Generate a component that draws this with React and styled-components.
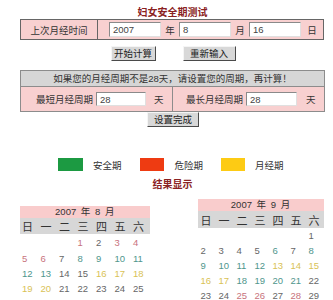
import React from "react";
import styled, { createGlobalStyle } from "styled-components";

const GlobalStyle = createGlobalStyle`
  body {
    margin: 0;
    background: #ffffff;
    font-family: "Liberation Sans", "Noto Sans CJK SC", sans-serif;
    color: #333333;
  }
`;

const Page = styled.div`
  width: 305px;
  margin-left: 20px;
  font-size: 9.5px;
`;

const Title = styled.div`
  margin-top: 7px;
  height: 12px;
  line-height: 12px;
  text-align: center;
  font-size: 10px;
  font-weight: bold;
  color: #8a2222;
`;

const DateRow = styled.div`
  display: flex;
  align-items: stretch;
  box-sizing: border-box;
  height: 21px;
  width: 304px;
  border: 1px solid #666666;
  background: #f8d0d0;
`;

const Label = styled.div`
  width: 76px;
  border-right: 1px solid #666666;
  display: flex;
  align-items: center;
  justify-content: center;
  color: #333;
`;

const Field = styled.input`
  box-sizing: border-box;
  width: ${(p) => p.w || 52}px;
  height: ${(p) => p.h || 15}px;
  margin: auto 0;
  margin-left: ${(p) => p.ml || 0}px;
  padding: 0 3px;
  border: 1px solid;
  border-color: #8a8a8a #e0e0e0 #e0e0e0 #8a8a8a;
  background: #ffffff;
  font-family: "Liberation Sans", "Noto Sans CJK SC", sans-serif;
  font-size: 9.5px;
  color: #444;
  outline: none;
`;

const Unit = styled.div`
  width: ${(p) => p.w || 18}px;
  flex: ${(p) => (p.grow ? 1 : "none")};
  display: flex;
  align-items: center;
  justify-content: center;
  color: #333;
`;

const ButtonBar = styled.div`
  display: flex;
  justify-content: center;
  gap: ${(p) => p.gap || 0}px;
  margin-top: ${(p) => p.mt || 0}px;
  padding-left: 1px;
`;

const Btn = styled.button`
  box-sizing: border-box;
  width: ${(p) => p.w}px;
  height: 15px;
  padding: 0;
  border: 1px solid;
  border-color: #f5f5f5 #4a4a4a #4a4a4a #f5f5f5;
  background: #d8d8d8;
  font-family: "Liberation Sans", "Noto Sans CJK SC", sans-serif;
  font-size: 9.5px;
  color: #222;
  line-height: 13px;
`;

const CycleTable = styled.div`
  margin-top: 9px;
  border: 1px solid #8c8c8c;
`;

const CycleHead = styled.div`
  height: 15px;
  line-height: 15px;
  text-align: center;
  background: #d6d6d6;
  border-bottom: 1px solid #8c8c8c;
  color: #333;
`;

const CycleRow = styled.div`
  display: flex;
  height: 24px;
  background: #f8d0d0;
`;

const CycleHalf = styled.div`
  display: flex;
  align-items: center;
  width: ${(p) => p.w}px;
  padding-left: ${(p) => p.pl}px;
  box-sizing: border-box;
  border-right: ${(p) => (p.divider ? "1px solid #8c8c8c" : "none")};
  flex: ${(p) => (p.grow ? 1 : "none")};
`;

const HalfLabel = styled.span`
  width: ${(p) => p.w}px;
  color: #333;
  white-space: nowrap;
`;

const HalfUnit = styled.span`
  margin-left: ${(p) => p.ml}px;
  color: #333;
`;

const Legend = styled.div`
  display: flex;
  align-items: center;
  margin-top: 31px;
  margin-left: 38px;
  height: 13px;
`;

const Swatch = styled.span`
  width: ${(p) => p.w || 25}px;
  height: 13px;
  background: ${(p) => p.color};
  margin-right: ${(p) => p.gap}px;
`;

const LegendText = styled.span`
  color: #333;
  margin-right: ${(p) => p.mr || 0}px;
  white-space: nowrap;
`;

const ResultTitle = styled.div`
  margin-top: 8px;
  height: 11px;
  line-height: 11px;
  text-align: center;
  font-size: 10px;
  font-weight: bold;
  color: #8a2222;
`;

const Calendars = styled.div`
  display: flex;
  align-items: flex-start;
`;

const Calendar = styled.div`
  width: ${(p) => p.col * 7}px;
  margin-top: ${(p) => p.mt}px;
  margin-left: ${(p) => p.ml || 0}px;
`;

const CalHead = styled.div`
  height: 12px;
  line-height: 12px;
  text-align: center;
  background: #f9cccc;
  color: #333;
  font-size: 9.5px;
  word-spacing: 2px;
`;

const WeekRow = styled.div`
  display: grid;
  grid-template-columns: repeat(7, ${(p) => p.col}px);
  height: ${(p) => p.h}px;
  align-items: center;
  background: #d7d7d7;
  font-size: 11px;
  color: #333;
  font-family: "Noto Sans CJK SC", sans-serif;
`;

const DayGrid = styled.div`
  display: grid;
  grid-template-columns: repeat(7, ${(p) => p.col}px);
  grid-auto-rows: ${(p) => p.row}px;
  align-items: center;
  padding-top: ${(p) => p.pt || 0}px;
`;

const Cell = styled.span`
  padding-left: ${(p) => p.pl}px;
  font-size: 9.5px;
  line-height: 10px;
  color: ${(p) => p.color};
`;

const WeekCell = styled.span`
  padding-left: ${(p) => p.pl}px;
`;

const COLORS = {
  r: "#c8727c",
  t: "#4f968c",
  y: "#d9c255",
  g: "#666666",
};

const WEEK = ["日", "一", "二", "三", "四", "五", "六"];

// only the weeks that fit in the visible frame are listed
const aug = {
  title: "2007 年 8 月",
  start: 3,
  days: 25,
  tone: (d) => {
    if ([1, 3, 4, 5, 6].includes(d)) return "r";
    if (d >= 8 && d <= 13) return "t";
    if (d >= 16 && d <= 20) return "y";
    return "g";
  },
};

const sep = {
  title: "2007 年 9 月",
  start: 6,
  days: 29,
  tone: (d) => {
    if ([6, 8, 9, 10, 11, 12, 18, 19, 20, 21].includes(d)) return "t";
    if (d >= 13 && d <= 17) return "y";
    if ([25, 26, 28].includes(d)) return "r";
    return "g";
  },
};

const Month = ({ data, col, row, mt, ml, weekH, pt, pl }) => {
  const cells = [];
  for (let i = 0; i < data.start; i++) cells.push(null);
  for (let d = 1; d <= data.days; d++) cells.push(d);
  return (
    <Calendar col={col} mt={mt} ml={ml}>
      <CalHead>{data.title}</CalHead>
      <WeekRow col={col} h={weekH}>
        {WEEK.map((w) => (
          <WeekCell key={w} pl={pl}>
            {w}
          </WeekCell>
        ))}
      </WeekRow>
      <DayGrid col={col} row={row} pt={pt}>
        {cells.map((d, i) => (
          <Cell key={i} pl={pl} color={d ? COLORS[data.tone(d)] : "transparent"}>
            {d || ""}
          </Cell>
        ))}
      </DayGrid>
    </Calendar>
  );
};

export default function App() {
  return (
    <>
      <GlobalStyle />
      <Page>
        <Title>妇女安全期测试</Title>
        <DateRow>
          <Label>上次月经时间</Label>
          <Field ml={11} defaultValue="2007" />
          <Unit>年</Unit>
          <Field defaultValue="8" />
          <Unit>月</Unit>
          <Field defaultValue="16" />
          <Unit grow>日</Unit>
        </DateRow>

        <ButtonBar gap={27} mt={6}>
          <Btn w={45}>开始计算</Btn>
          <Btn w={53}>重新输入</Btn>
        </ButtonBar>

        <CycleTable>
          <CycleHead>如果您的月经周期不是28天，请设置您的周期，再计算！</CycleHead>
          <CycleRow>
            <CycleHalf w={152} pl={15} divider>
              <HalfLabel w={60}>最短月经周期</HalfLabel>
              <Field w={50} h={14} defaultValue="28" />
              <HalfUnit ml={8}>天</HalfUnit>
            </CycleHalf>
            <CycleHalf grow pl={13}>
              <HalfLabel w={60}>最长月经周期</HalfLabel>
              <Field w={51} h={14} defaultValue="28" />
              <HalfUnit ml={9}>天</HalfUnit>
            </CycleHalf>
          </CycleRow>
        </CycleTable>

        <ButtonBar mt={0}>
          <Btn w={52}>设置完成</Btn>
        </ButtonBar>

        <Legend>
          <Swatch color="#1c9a42" gap={10} />
          <LegendText mr={18}>安全期</LegendText>
          <Swatch color="#ee3b12" w={24} gap={11} />
          <LegendText mr={18}>危险期</LegendText>
          <Swatch color="#fdcb14" w={24} gap={10} />
          <LegendText>月经期</LegendText>
        </Legend>

        <ResultTitle>结果显示</ResultTitle>

        <Calendars>
          <Month data={aug} col={18.5} row={15.4} mt={16} weekH={16} pt={1.5} pl={2} />
          <Month data={sep} col={18} row={15} mt={9} ml={48} weekH={17} pt={0} pl={3} />
        </Calendars>
      </Page>
    </>
  );
}
